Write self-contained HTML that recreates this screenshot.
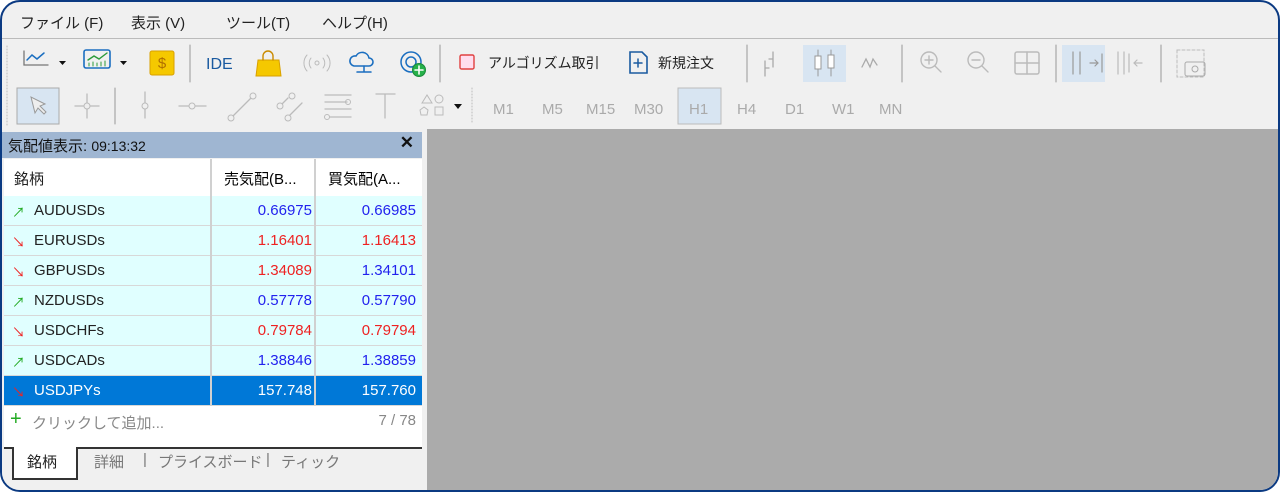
<!DOCTYPE html>
<html><head><meta charset="utf-8"><style>
*{box-sizing:border-box;margin:0;padding:0}
body{width:1280px;height:492px;background:#fff;font-family:"Liberation Sans","Noto Sans CJK JP",sans-serif;overflow:hidden;position:relative}
.frame{position:absolute;left:0;top:0;width:1280px;height:492px;border:2px solid #0b3a82;border-radius:20px;overflow:hidden;background:#f0f0f0}
.menu{position:absolute;left:0;top:0;width:100%;height:37px;border-bottom:1px solid #bbb;font-size:15px;color:#222}
.menu span{position:absolute;top:10px}
.tb{position:absolute;font-size:14px;color:#222}
.chart{position:absolute;left:425px;top:127px;right:0;bottom:0;background:#ababab}
.panel{position:absolute;left:0;top:127px;width:425px;bottom:0;background:#f0f0f0}
.title{position:absolute;left:0;top:3px;width:420px;height:26px;background:#9fb6d2;font-size:15px;color:#111;padding:3px 6px}
.tbl{position:absolute;left:2px;top:30px;width:418px}
.row{position:relative;height:30px;border-bottom:1px solid #d8d8d8;background:#e0ffff;font-size:15px}
.row div{position:absolute;top:6px}
.row .c1{left:30px;color:#222}
.row .c2{right:110px;text-align:right}
.row .c3{right:6px}
.row .a{left:8px;font-size:13px}
.vl{position:absolute;top:0;width:2px;background:#d0d0d0}
.b{color:#2222ee}.r{color:#ee2222}
.tab{position:absolute;font-size:15px;color:#777;top:322px}
</style></head><body>
<div class="frame">
<div class="menu"><span style="left:18px">ファイル (F)</span><span style="left:129px">表示 (V)</span><span style="left:224px">ツール(T)</span><span style="left:320px">ヘルプ(H)</span></div>

<svg style="position:absolute;left:0;top:38px" width="1280" height="90">
<g fill="none" stroke-linecap="round">
<line x1="5" y1="6" x2="5" y2="86" stroke="#bbb" stroke-dasharray="1 2"/>
<path d="M22 11v14h24" stroke="#777" stroke-width="1.3"/><path d="M25 20l5-5 5 4 7-6" stroke="#1a6ec0" stroke-width="1.5"/>
<path d="M57 21h7l-3.5 4z" fill="#111"/>
<rect x="82" y="10" width="26" height="18" rx="2" stroke="#1a6ec0" stroke-width="1.6"/><path d="M86 20l6-4 5 3 8-6" stroke="#2a9a3a" stroke-width="1.4"/><path d="M87 26v-3M91 26v-4M95 26v-3M99 26v-4M103 26v-5" stroke="#2a9a3a"/>
<path d="M118 21h7l-3.5 4z" fill="#111"/>
<rect x="148" y="11" width="24" height="24" rx="2" fill="#f5c800" stroke="#d9a000"/>
<line x1="188" y1="5" x2="188" y2="42" stroke="#999"/>
<path d="M256 20h21l2 16h-25z" fill="#f5c800" stroke="#d9a000"/><path d="M261 20v-4a5 5 0 0 1 10 0v4" stroke="#c98a00" stroke-width="1.4"/>
<circle cx="315" cy="23" r="2" stroke="#bbb"/><path d="M309 18a8 8 0 0 0 0 10M321 18a8 8 0 0 1 0 10M305 15a12 12 0 0 0 0 16M325 15a12 12 0 0 1 0 16" stroke="#bbb"/>
<path d="M352 26a5 5 0 0 1 2-10a7 7 0 0 1 13 2a4 4 0 0 1 0 8z" stroke="#1a6ec0" stroke-width="1.6"/><path d="M362 26v6M355 32h14" stroke="#1a6ec0" stroke-width="1.5"/>
<circle cx="409" cy="22" r="10" stroke="#1a6ec0" stroke-width="1.5"/><circle cx="409" cy="22" r="5" stroke="#1a6ec0" stroke-width="1.5"/><circle cx="417" cy="30" r="6.5" fill="#27b14a" stroke="#1a8a3a"/><path d="M417 26v8M413 30h8" stroke="#fff" stroke-width="1.6"/>
<line x1="438" y1="5" x2="438" y2="42" stroke="#999"/>
<rect x="458" y="15" width="14" height="14" rx="1.5" fill="#fde" stroke="#e04040" stroke-width="1.4"/>
<path d="M628 12h12l5 5v16h-17z" stroke="#1a5aa0" stroke-width="1.6"/><path d="M636 19v8M632 23h8" stroke="#1a5aa0" stroke-width="1.5"/>
<line x1="745" y1="5" x2="745" y2="42" stroke="#999"/>
<path d="M763 21v15M763 28h4M771 12v15M767 19h4" stroke="#aaa" stroke-width="1.3"/>
<rect x="801" y="5" width="43" height="37" fill="#d8e5f2"/>
<path d="M816 10v26M829 10v26" stroke="#999"/><rect x="813" y="16" width="6" height="13" fill="#fff" stroke="#999"/><rect x="826" y="15" width="6" height="13" fill="#fff" stroke="#999"/>
<path d="M860 27l4-8 4 8 3-8 4 6" stroke="#aaa" stroke-width="1.3"/>
<line x1="900" y1="5" x2="900" y2="42" stroke="#999"/>
<circle cx="927" cy="20" r="8" stroke="#bbb" stroke-width="1.4"/><path d="M933 26l6 6M923 20h8M927 16v8" stroke="#bbb" stroke-width="1.4"/>
<circle cx="974" cy="20" r="8" stroke="#bbb" stroke-width="1.4"/><path d="M980 26l6 6M970 20h8" stroke="#bbb" stroke-width="1.4"/>
<rect x="1013" y="12" width="24" height="22" rx="2" stroke="#bbb" stroke-width="1.5"/><path d="M1025 12v22M1013 23h24" stroke="#bbb" stroke-width="1.5"/>
<line x1="1054" y1="5" x2="1054" y2="42" stroke="#999"/>
<rect x="1060" y="5" width="43" height="37" fill="#d8e5f2"/>
<path d="M1071 12v22M1078 12v22M1088 23h8M1093 20l3 3-3 3M1100 14v18" stroke="#999" stroke-width="1.2"/>
<path d="M1116 12v22M1122 12v22M1132 23h8M1135 20l-3 3 3 3M1127 14v18" stroke="#bbb" stroke-width="1.2"/>
<line x1="1159" y1="5" x2="1159" y2="42" stroke="#999"/>
<rect x="1175" y="10" width="27" height="27" stroke="#bbb" stroke-dasharray="3 2"/><rect x="1183" y="22" width="20" height="14" rx="2" stroke="#aaa"/><circle cx="1193" cy="29" r="3" stroke="#aaa"/>
<rect x="15" y="48" width="42" height="36" fill="#d8e5f2" stroke="#aaa"/>
<path d="M29 57l4 16 3-5 6 6 2-2-6-6 5-2z" fill="#eee" stroke="#999"/>
<path d="M73 66h24M85 54v24" stroke="#bbb" stroke-width="1.3"/><circle cx="85" cy="66" r="3" fill="#eee" stroke="#bbb"/>
<line x1="113" y1="48" x2="113" y2="84" stroke="#999"/>
<path d="M143 52v26" stroke="#bbb" stroke-width="1.3"/><circle cx="143" cy="66" r="3" fill="#f0f0f0" stroke="#bbb"/>
<path d="M177 66h27" stroke="#bbb" stroke-width="1.3"/><circle cx="190" cy="66" r="3" fill="#f0f0f0" stroke="#bbb"/>
<path d="M229 78l22-22" stroke="#bbb" stroke-width="1.3"/><circle cx="229" cy="78" r="3" fill="#f0f0f0" stroke="#bbb"/><circle cx="251" cy="56" r="3" fill="#f0f0f0" stroke="#bbb"/>
<path d="M276 68l10-10M285 78l15-15" stroke="#bbb" stroke-width="1.3"/><circle cx="278" cy="66" r="3" fill="#f0f0f0" stroke="#bbb"/><circle cx="286" cy="78" r="3" fill="#f0f0f0" stroke="#bbb"/><circle cx="290" cy="56" r="3" fill="#f0f0f0" stroke="#bbb"/>
<path d="M323 55h26M323 62h22M323 69h26M328 77h21" stroke="#bbb" stroke-width="1.3"/><circle cx="346" cy="62" r="2.5" stroke="#bbb"/><circle cx="325" cy="77" r="2.5" stroke="#bbb"/>
<path d="M374 54h19M383 54v24" stroke="#bbb" stroke-width="1.3"/>
<path d="M420 63l5-8 5 8z" stroke="#bbb"/><circle cx="437" cy="59" r="4" stroke="#bbb"/><path d="M418 70l4-3 4 3-1 5h-6z" stroke="#bbb"/><rect x="433" y="67" width="8" height="8" stroke="#bbb"/>
<path d="M452 64h8l-4 5z" fill="#111"/>
<line x1="470" y1="48" x2="470" y2="84" stroke="#bbb" stroke-dasharray="1 2"/>
<rect x="676" y="48" width="43" height="36" fill="#d8e5f2" stroke="#bbb"/>
</g>
<g font-family="Liberation Sans,sans-serif" font-size="15" fill="#aaa">
<text x="160" y="28" font-size="15" fill="#b07000" text-anchor="middle">$</text>
<text x="204" y="29" fill="#1a5aa0" font-size="16">IDE</text>
<text x="491" y="74">M1</text><text x="540" y="74">M5</text><text x="584" y="74">M15</text><text x="632" y="74">M30</text><text x="687" y="74">H1</text><text x="735" y="74">H4</text><text x="783" y="74">D1</text><text x="830" y="74">W1</text><text x="877" y="74">MN</text>
</g>
</svg>
<div class="tb" style="left:486px;top:51px">アルゴリズム取引</div>
<div class="tb" style="left:656px;top:51px">新規注文</div>

<div class="chart"></div>
<div class="panel">
<div class="title">気配値表示: <span style="font-size:14px">09:13:32</span><span style="position:absolute;right:8px;top:1px;font-weight:bold;font-size:17px">✕</span></div>
<div class="tbl">
<div class="row" style="background:#fff;height:37px;border-bottom:none"><div style="left:10px;top:9px;color:#222">銘柄</div><div style="left:220px;top:9px">売気配(B...</div><div style="left:324px;top:9px">買気配(A...</div></div>
<div class="row"><div class="a" style="color:#2a2">↗</div><div class="c1">AUDUSDs</div><div class="c2 b">0.66975</div><div class="c3 b">0.66985</div></div>
<div class="row"><div class="a r">↘</div><div class="c1">EURUSDs</div><div class="c2 r">1.16401</div><div class="c3 r">1.16413</div></div>
<div class="row"><div class="a r">↘</div><div class="c1">GBPUSDs</div><div class="c2 r">1.34089</div><div class="c3 b">1.34101</div></div>
<div class="row"><div class="a" style="color:#2a2">↗</div><div class="c1">NZDUSDs</div><div class="c2 b">0.57778</div><div class="c3 b">0.57790</div></div>
<div class="row"><div class="a r">↘</div><div class="c1">USDCHFs</div><div class="c2 r">0.79784</div><div class="c3 r">0.79794</div></div>
<div class="row"><div class="a" style="color:#2a2">↗</div><div class="c1">USDCADs</div><div class="c2 b">1.38846</div><div class="c3 b">1.38859</div></div>
<div class="row" style="background:#0078d7"><div class="a r">↘</div><div class="c1" style="color:#fff">USDJPYs</div><div class="c2" style="color:#fff">157.748</div><div class="c3" style="color:#fff">157.760</div></div>
<div class="row" style="background:#fff;border-bottom:none;height:41px"><div style="left:6px;top:2px;color:#2a2;font-size:20px">+</div><div style="left:28px;color:#888">クリックして追加...</div><div style="right:6px;color:#888">7 / 78</div></div>
<div class="vl" style="left:206px;height:247px"></div><div class="vl" style="left:310px;height:247px"></div>
</div>
<div style="position:absolute;left:2px;top:318px;width:418px;height:2px;background:#333"></div>
<div style="position:absolute;left:10px;top:318px;width:66px;height:33px;background:#fff;border:2px solid #333;border-top:none"></div>
<div class="tab" style="left:25px;color:#222">銘柄</div>
<div class="tab" style="left:92px">詳細</div><div class="tab" style="left:141px">|</div>
<div class="tab" style="left:156px">プライスボード</div><div class="tab" style="left:264px">|</div>
<div class="tab" style="left:279px">ティック</div>
</div>
</div>
</body></html>
